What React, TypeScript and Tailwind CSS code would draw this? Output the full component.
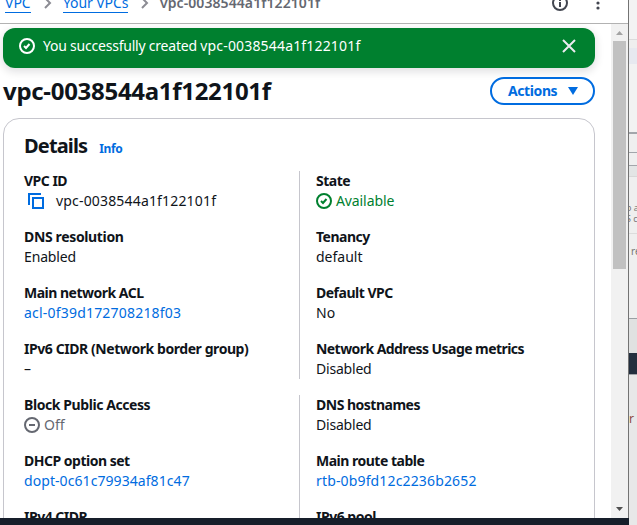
import type { ReactNode } from "react";

function CheckIcon({ className }: { className?: string }) {
  return (
    <svg viewBox="0 0 16 16" className={`size-4 shrink-0 ${className ?? ""}`} fill="none" stroke="currentColor" strokeWidth="2">
      <circle cx="8" cy="8" r="7" />
      <path d="m5 8 2 2 3.5-4" />
    </svg>
  );
}

function CopyIcon() {
  return (
    <svg viewBox="0 0 16 16" className="size-4 shrink-0" fill="none" stroke="#006ce0" strokeWidth="2">
      <path d="M13 1H1v11" />
      <path d="M5 5h10v10H5z" />
    </svg>
  );
}

function OffIcon() {
  return (
    <svg viewBox="0 0 16 16" className="size-4 shrink-0" fill="none" stroke="currentColor" strokeWidth="2">
      <circle cx="8" cy="8" r="7" />
      <path d="M5 8h6" />
    </svg>
  );
}

function Chevron() {
  return (
    <svg viewBox="0 0 8 12" className="h-3 w-2 shrink-0" fill="none" stroke="#8c8c94" strokeWidth="2">
      <path d="m1 1 5 5-5 5" />
    </svg>
  );
}

function Field({ label, labelClass = "tracking-[-0.5px]", children }: { label: string; labelClass?: string; children?: ReactNode }) {
  return (
    <div className="h-10">
      <div className={`whitespace-nowrap font-bold ${labelClass}`}>{label}</div>
      <div className="flex h-5 items-center">{children}</div>
    </div>
  );
}

function TopBar() {
  return (
    <header className="flex h-[24px] shrink-0 items-end overflow-hidden border-b border-[#b2b2b2] text-[14px]">
      <div className="flex h-[30px] w-full items-start pl-[5px]">
        <nav className="flex h-5 items-center whitespace-nowrap leading-5">
          <a className="w-[26px] shrink-0 border-b border-[#006ce0] leading-[18px] text-[#006ce0]">VPC</a>
          <span className="ml-[13px]"><Chevron /></span>
          <a className="ml-[11px] w-[65px] shrink-0 border-b border-[#006ce0] leading-[18px] tracking-[-0.1px] text-[#006ce0]">Your VPCs</a>
          <span className="ml-[13px]"><Chevron /></span>
          <span className="ml-[11px] font-semibold tracking-[0.08px] text-[#656871]">vpc-0038544a1f122101f</span>
        </nav>
        <div className="ml-auto mr-[28px] flex items-start">
          <svg viewBox="0 0 16 16" className="mt-[2px] size-4" fill="none" stroke="#424650" strokeWidth="2">
            <circle cx="8" cy="8" r="7" />
            <path d="M8 7v5M8 4v2" />
          </svg>
          <svg viewBox="0 0 4 16" className="ml-[28px] mt-[2px] h-4 w-1" fill="#424650">
            <circle cx="2" cy="2" r="1.6" />
            <circle cx="2" cy="8" r="1.6" />
            <circle cx="2" cy="13" r="1.6" />
          </svg>
        </div>
      </div>
    </header>
  );
}

function SuccessMessage() {
  return (
    <div className="flex h-10 shrink-0 items-center rounded-xl bg-[#00802f] pl-4 pr-[19px] text-white shadow-[0_3px_8px_1px_rgba(0,7,22,0.12)]">
      <CheckIcon className="-mt-1" />
      <span className="-mt-1 ml-2 tracking-[-0.22px]">You successfully created <span className="tracking-[0.17px]">vpc-0038544a1f122101f</span></span>
      <svg viewBox="0 0 14 14" className="-mt-1 ml-auto size-[14px]" fill="none" stroke="#ebebf0" strokeWidth="2">
        <path d="m1 1 12 12M13 1 1 13" />
      </svg>
    </div>
  );
}

function Details() {
  return (
    <section className="mt-[13px] h-[520px] shrink-0 rounded-2xl border border-[#c6c6cd] px-5">
      <div className="mt-[15px] flex h-6 items-baseline">
        <h2 className="text-[20px] font-bold leading-6 tracking-[-0.85px]">Details</h2>
        <a className="ml-3 text-[12px] font-bold tracking-[-0.4px] text-[#006ce0]">Info</a>
      </div>
      <div className="mt-[13px] flex">
        <div className="flex w-[275px] flex-col gap-4">
          <Field label="VPC ID">
            <span className="ml-1"><CopyIcon /></span>
            <span className="ml-3 tracking-[0.17px]">vpc-0038544a1f122101f</span>
          </Field>
          <Field label="DNS resolution" labelClass="tracking-[-0.35px]"><span className="tracking-[-0.15px]">Enabled</span></Field>
          <Field label="Main network ACL"><a className="tracking-[0.2px] text-[#006ce0]">acl-0f39d172708218f03</a></Field>
          <Field label="IPv6 CIDR (Network border group)" labelClass="tracking-[-0.43px]">–</Field>
        </div>
        <div className="flex h-[208px] flex-col gap-4 border-l border-[#c6c6cd] pl-4">
          <Field label="State"><span className="flex items-center gap-1 tracking-[-0.1px] text-[#00802f]"><CheckIcon />Available</span></Field>
          <Field label="Tenancy">default</Field>
          <Field label="Default VPC">No</Field>
          <Field label="Network Address Usage metrics" labelClass="tracking-[-0.56px]"><span className="tracking-[-0.2px]">Disabled</span></Field>
        </div>
      </div>
      <div className="mt-4 flex">
        <div className="flex w-[275px] flex-col gap-4">
          <Field label="Block Public Access" labelClass="tracking-[-0.42px]"><span className="flex items-center gap-1 text-[#656871]"><OffIcon />Off</span></Field>
          <Field label="DHCP option set"><a className="tracking-[0.07px] text-[#006ce0]">dopt-0c61c79934af81c47</a></Field>
          <Field label="IPv4 CIDR" />
        </div>
        <div className="flex flex-col gap-4 border-l border-[#c6c6cd] pl-4">
          <Field label="DNS hostnames"><span className="tracking-[-0.2px]">Disabled</span></Field>
          <Field label="Main route table"><a className="tracking-[0.15px] text-[#006ce0]">rtb-0b9fd12c2236b2652</a></Field>
          <Field label="IPv6 pool" />
        </div>
      </div>
    </section>
  );
}

function Scrollbar() {
  return (
    <div className="flex w-[17px] shrink-0 flex-col items-center bg-[#f1f1f1]">
      <svg viewBox="0 0 17 17" className="size-[17px]" fill="#a3a3a3"><path d="M5 11h7L8.5 7z" /></svg>
      <div className="h-[228px] w-[13px] bg-[#c1c1c1]" />
      <svg viewBox="0 0 17 17" className="mt-auto size-[17px]" fill="#505050"><path d="M5 6h7L8.5 10z" /></svg>
    </div>
  );
}

function BackgroundWindow() {
  return (
    <aside className="flex w-2 shrink-0 flex-col overflow-hidden whitespace-nowrap bg-[#efefef] text-[9px] leading-[11px] text-[#777]">
      <div className="h-[40px] shrink-0 border-b border-[#dcdcdc] bg-[#f3f3f3]" />
      <div className="h-2 shrink-0" />
      <div className="h-4 shrink-0 bg-[#e7e9f0]" />
      <div className="h-[70px] shrink-0 border-b-2 border-[#a2a6ab] bg-[#f2f2f2]" />
      <div className="h-[19px] shrink-0 border-b border-[#a2a6ab]" />
      <div className="h-[13px] shrink-0 border-b border-[#a2a6ab]" />
      <div className="h-[11px] shrink-0 border-b border-[#d8d8d8] bg-[#e3e5e5]" />
      <div className="h-[57px] shrink-0 border-b border-[#dcdcdc] pt-[25px]">
        <div className="-ml-[3px]">o a</div>
        <div className="-ml-[3px]">S c</div>
      </div>
      <div className="h-[85px] shrink-0 border-b border-[#9a9fa3] pl-[2px] pt-[12px] text-[10px]">re</div>
      <div className="h-[34px] shrink-0 bg-[#e0e1e1]" />
      <div className="h-[21px] shrink-0 bg-[#232f3e]" />
      <div className="flex-1 border-t border-[#a0a4a8] bg-[#e8e8e8] pt-[38px] text-[12px] text-[#8f4a40]">r</div>
    </aside>
  );
}

export default function App() {
  return (
    <div className="flex h-[525px] w-[637px] overflow-hidden bg-white font-['Noto_Sans','Open_Sans',sans-serif] text-[14px] leading-5 text-[#0f141a]">
      <div className="flex w-[629px] shrink-0 flex-col">
        <div className="flex h-[518px] flex-col overflow-hidden border-r border-[#737373]">
          <TopBar />
          <div className="flex min-h-0 flex-1">
            <main className="flex min-w-0 flex-1 flex-col overflow-hidden pl-[3px] pr-4 pt-1">
              <SuccessMessage />
              <div className="mt-[9px] flex h-7 shrink-0 items-center justify-between">
                <h1 className="text-[24px] font-bold leading-7 tracking-[-0.3px]">vpc-0038544a1f122101f</h1>
                <button className="flex h-7 w-[105px] items-center rounded-full border-2 border-[#006ce0] pl-[16px] font-bold tracking-[-0.4px] text-[#006ce0]">
                  Actions
                  <svg viewBox="0 0 10 8" className="ml-[11px] h-2 w-[10px]" fill="currentColor"><path d="M0 0h10L5 8z" /></svg>
                </button>
              </div>
              <Details />
            </main>
            <Scrollbar />
          </div>
        </div>
        <div className="h-[7px] bg-[#161e2a]" />
      </div>
      <BackgroundWindow />
    </div>
  );
}
